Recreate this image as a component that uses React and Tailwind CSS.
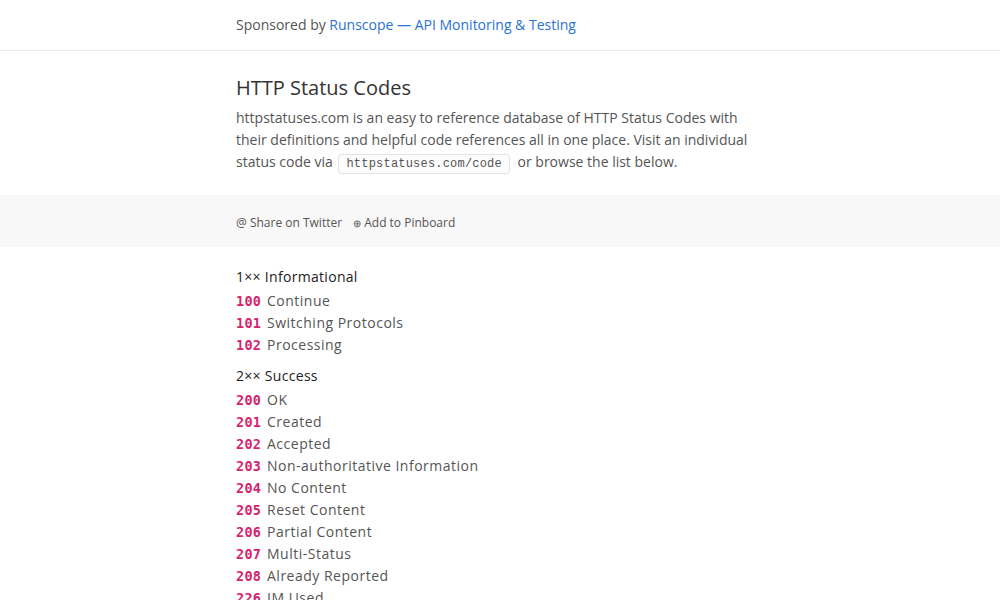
const sans = { fontFamily: '"Open Sans", "Noto Sans", sans-serif' };
const mono = { fontFamily: '"DejaVu Sans Mono", monospace' };

const groups = [
  {
    title: '1×× Informational',
    codes: [
      ['100', 'Continue'],
      ['101', 'Switching Protocols'],
      ['102', 'Processing'],
    ],
  },
  {
    title: '2×× Success',
    codes: [
      ['200', 'OK'],
      ['201', 'Created'],
      ['202', 'Accepted'],
      ['203', 'Non-authoritative Information'],
      ['204', 'No Content'],
      ['205', 'Reset Content'],
      ['206', 'Partial Content'],
      ['207', 'Multi-Status'],
      ['208', 'Already Reported'],
      ['226', 'IM Used'],
    ],
  },
  {
    title: '3×× Redirection',
    codes: [
      ['300', 'Multiple Choices'],
      ['301', 'Moved Permanently'],
      ['302', 'Found'],
      ['303', 'See Other'],
      ['304', 'Not Modified'],
      ['305', 'Use Proxy'],
      ['307', 'Temporary Redirect'],
      ['308', 'Permanent Redirect'],
    ],
  },
];

function CodeGroup({ title, codes }) {
  return (
    <div className="mt-[9px] first:mt-0">
      <h2 className="text-[14px] leading-[22px] text-[#222] mb-[2px] tracking-[0.3px]">{title}</h2>
      <ul>
        {codes.map(([code, name]) => (
          <li key={code} className="flex items-baseline h-[22px] text-[14px] leading-[22px] text-[#555] tracking-[0.5px]">
            <a href="#" className="w-[31px] shrink-0 text-[13.5px] leading-[22px] font-bold text-[#d6246e] tracking-[0.3px]" style={mono}>
              {code}
            </a>
            <a href="#">{name}</a>
          </li>
        ))}
      </ul>
    </div>
  );
}

export default function App() {
  return (
    <div className="min-h-screen bg-white" style={sans}>
      <div className="border-b border-[#e8e8e8]">
        <div className="w-[528px] mx-auto h-[50px] pb-[2px] flex items-center text-[14px] text-[#555]">
          Sponsored by&nbsp;<a href="#" className="text-[#2a72d5]">Runscope — API Monitoring &amp; Testing</a>
        </div>
      </div>

      <div className="w-[528px] mx-auto pt-[25px] pb-[21px]">
        <h1 className="text-[20px] leading-[24px] text-[#333] mb-[7px]">HTTP Status Codes</h1>
        <p className="text-[14px] leading-[22px] text-[#555]">
          httpstatuses.com is an easy to reference database of HTTP Status Codes with their definitions and helpful code
          references all in one place. Visit an individual status code via{' '}
          <code className="inline-block px-[7px] leading-[18px] text-[12px] text-[#555] bg-[#fcfcfc] border border-[#e3e3e3] rounded-[3px] ml-[2px] mr-[4px] tracking-[0.2px]" style={{ fontFamily: '"Liberation Mono", monospace' }}>
            httpstatuses.com/code
          </code>{' '}
          or browse the list below.
        </p>
      </div>

      <div className="bg-[#f8f8f8]">
        <div className="w-[528px] mx-auto pt-[20px] pb-[16px] leading-[16px] text-[12px] text-[#555] flex gap-[11px]">
          <a href="#">@ Share on Twitter</a>
          <a href="#"><span className="text-[10px]">⊕</span> Add to Pinboard</a>
        </div>
      </div>

      <div className="w-[528px] mx-auto pt-[19px] pb-10">
        {groups.map((g) => (
          <CodeGroup key={g.title} title={g.title} codes={g.codes} />
        ))}
      </div>
    </div>
  );
}
